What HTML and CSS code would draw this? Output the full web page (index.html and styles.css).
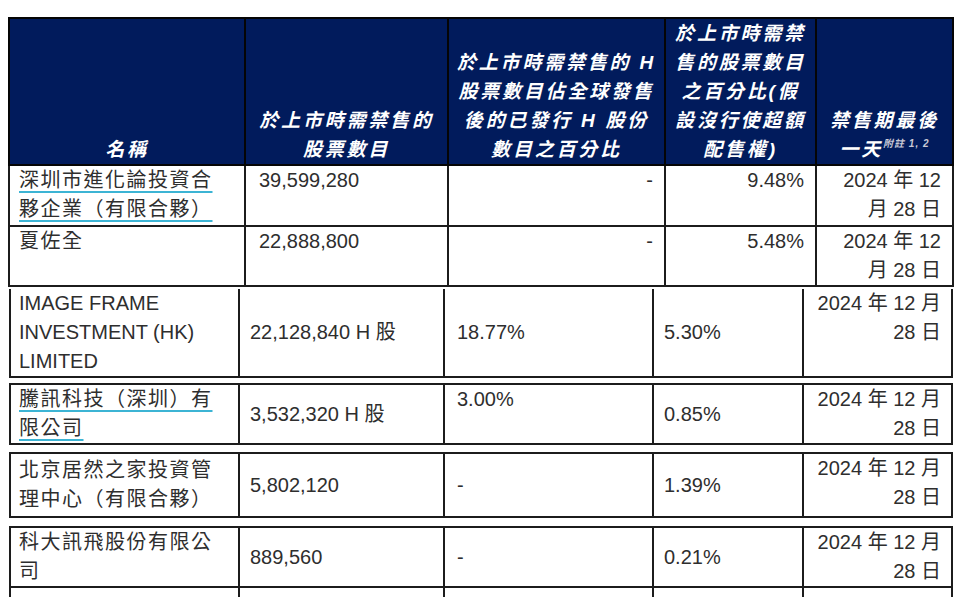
FILE: index.html
```html
<!DOCTYPE html>
<html lang="zh-Hant">
<head>
<meta charset="utf-8">
<title>禁售股份</title>
<link rel="stylesheet" href="styles.css">
</head>
<body>
<div class="page">
  <table class="t top">
    <colgroup><col class="a1"><col class="a2"><col class="a3"><col class="a4"><col class="a5"></colgroup>
    <thead>
      <tr class="hd">
        <th>名稱</th>
        <th>於上市時需禁售的<br>股票數目</th>
        <th>於上市時需禁售的 H<br>股票數目佔全球發售<br>後的已發行 H 股份<br>數目之百分比</th>
        <th>於上市時需禁<br>售的股票數目<br>之百分比(假<br>設沒行使超額<br>配售權)</th>
        <th>禁售期最後<br>一天<sup class="note">附註 1, 2</sup></th>
      </tr>
    </thead>
    <tbody>
      <tr class="r1">
        <td class="name"><span class="ul">深圳市進化論投資合</span><br><span class="ul">夥企業（有限合夥）</span></td>
        <td class="ind">39,599,280</td>
        <td class="rt">-</td>
        <td class="rt">9.48%</td>
        <td class="rt">2024 年 12<br>月 28 日</td>
      </tr>
      <tr class="r2">
        <td class="name">夏佐全</td>
        <td class="ind">22,888,800</td>
        <td class="rt">-</td>
        <td class="rt">5.48%</td>
        <td class="rt">2024 年 12<br>月 28 日</td>
      </tr>
    </tbody>
  </table>

  <table class="t low open g1">
    <colgroup><col class="b1"><col class="b2"><col class="b3"><col class="b4"><col class="b5"></colgroup>
    <tr class="h3">
      <td class="en">IMAGE FRAME<br>INVESTMENT (HK)<br>LIMITED</td>
      <td>22,128,840 H 股</td>
      <td>18.77%</td>
      <td>5.30%</td>
      <td class="dt">2024 年 12 月<br>28 日</td>
    </tr>
  </table>

  <table class="t low g2">
    <colgroup><col class="b1"><col class="b2"><col class="b3"><col class="b4"><col class="b5"></colgroup>
    <tr class="h2a">
      <td class="name"><span class="ul">騰訊科技（深圳）有</span><br><span class="ul">限公司</span></td>
      <td>3,532,320 H 股</td>
      <td class="top-al">3.00%</td>
      <td>0.85%</td>
      <td class="dt">2024 年 12 月<br>28 日</td>
    </tr>
  </table>

  <table class="t low g3">
    <colgroup><col class="b1"><col class="b2"><col class="b3"><col class="b4"><col class="b5"></colgroup>
    <tr class="h2b">
      <td class="name">北京居然之家投資管<br>理中心（有限合夥）</td>
      <td>5,802,120</td>
      <td>-</td>
      <td>1.39%</td>
      <td class="dt">2024 年 12 月<br>28 日</td>
    </tr>
  </table>

  <table class="t low g4">
    <colgroup><col class="b1"><col class="b2"><col class="b3"><col class="b4"><col class="b5"></colgroup>
    <tr class="h2c">
      <td class="name">科大訊飛股份有限公<br>司</td>
      <td>889,560</td>
      <td>-</td>
      <td>0.21%</td>
      <td class="dt">2024 年 12 月<br>28 日</td>
    </tr>
  </table>

  <table class="t low open tail">
    <colgroup><col class="b1"><col class="b2"><col class="b3"><col class="b4"><col class="b5"></colgroup>
    <tr class="h-tail"><td></td><td></td><td></td><td></td><td></td></tr>
  </table>
</div>
</body>
</html>
```

FILE: styles.css
```css
html, body {
  margin: 0;
  padding: 0;
  background: #ffffff;
}

.page {
  padding: 17px 8px 0 8px;
  font-family: "Liberation Sans", "Noto Sans CJK TC", sans-serif;
  font-size: 20px;
  line-height: 29px;
  color: #2e2e2e;
}

.t {
  border-collapse: collapse;
  table-layout: fixed;
}

.t td, .t th {
  padding: 0;
  border: 2px solid #1c1c1c;
}

/* ---------- top table ---------- */
.top {
  width: 944px;
  border-top: 2px solid #9a9a9a;
}
.a1 { width: 236px; }
.a2 { width: 203px; }
.a3 { width: 217px; }
.a4 { width: 151px; }
.a5 { width: 137px; }

.hd { height: 145px; }
.t .hd th {
  background: #011b5c;
  color: #ffffff;
  font-family: "Liberation Sans", "Noto Sans CJK TC", sans-serif;
  font-size: 19px;
  font-weight: bold;
  font-style: italic;
  letter-spacing: 2.8px;
  line-height: 29px;
  text-align: center;
  vertical-align: bottom;
  border-color: #050505;
}

.note {
  font-size: 10px;
  font-weight: bold;
  letter-spacing: 1px;
  color: #c9c9d6;
  vertical-align: 9px;
  line-height: 0;
}

.r1 { height: 61px; }
.r2 { height: 58px; }

.top td { vertical-align: top; }

.t td.name {
  padding-left: 9px;
  letter-spacing: 1.5px;
  text-align: left;
}
.t td.ind { padding-left: 13px; }
.t td.rt {
  text-align: right;
  padding-right: 11px;
}

.ul {
  text-decoration: underline;
  text-decoration-color: #3cb4d4;
  text-decoration-thickness: 2px;
  text-underline-offset: 4px;
}

/* ---------- lower tables ---------- */
.low {
  width: 942px;
  margin-left: 1px;
}
.b1 { width: 229px; }
.b2 { width: 205px; }
.b3 { width: 209px; }
.b4 { width: 150px; }
.b5 { width: 149px; }

.low td {
  vertical-align: middle;
  padding-left: 10px;
}
.low td.name { padding-left: 8px; }
.low td:nth-child(3) { padding-left: 12px; }
.low td.en { padding-left: 8px; }
.low td.dt {
  vertical-align: top;
  text-align: right;
  padding-left: 0;
  padding-right: 10px;
}
.low td.top-al { vertical-align: top; }

.open td { border-top: none; }

.g1 { margin-top: 2px; }
.g2 { margin-top: 5px; }
.g3 { margin-top: 7px; }
.g4 { margin-top: 8px; }
.tail { margin-top: 0; }

.h3 { height: 87px; }
.h2a { height: 59px; }
.h2b { height: 64px; }
.h2c { height: 58px; }
.h-tail { height: 40px; }
.h-tail td { border-bottom: none; }
```
